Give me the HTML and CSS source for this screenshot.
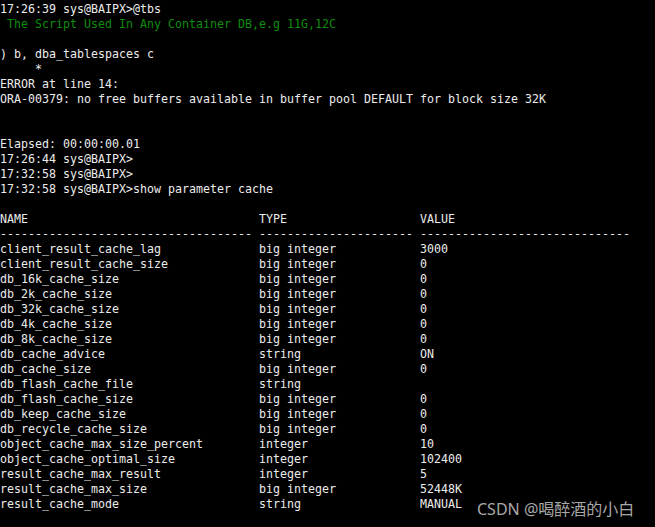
FILE: index.html
```html
<!DOCTYPE html>
<html>
<head>
<meta charset="utf-8">
<link rel="stylesheet" href="styles.css">
</head>
<body>
<div class="term"><pre class="out">17:26:39 sys@BAIPX&gt;@tbs
<span class="green"> The Script Used In Any Container DB,e.g 11G,12C</span>

) b, dba_tablespaces c
     *
ERROR at line 14:
ORA-00379: no free buffers available in buffer pool DEFAULT for block size 32K


Elapsed: 00:00:00.01
17:26:44 sys@BAIPX&gt;
17:32:58 sys@BAIPX&gt;
17:32:58 sys@BAIPX&gt;show parameter cache

NAME                                 TYPE                   VALUE
------------------------------------ ---------------------- ------------------------------
client_result_cache_lag              big integer            3000
client_result_cache_size             big integer            0
db_16k_cache_size                    big integer            0
db_2k_cache_size                     big integer            0
db_32k_cache_size                    big integer            0
db_4k_cache_size                     big integer            0
db_8k_cache_size                     big integer            0
db_cache_advice                      string                 ON
db_cache_size                        big integer            0
db_flash_cache_file                  string
db_flash_cache_size                  big integer            0
db_keep_cache_size                   big integer            0
db_recycle_cache_size                big integer            0
object_cache_max_size_percent        integer                10
object_cache_optimal_size            integer                102400
result_cache_max_result              integer                5
result_cache_max_size                big integer            52448K
result_cache_mode                    string                 MANUAL</pre>
<div class="watermark">CSDN @喝醉酒的小白</div>
</div>
</body>
</html>
```
FILE: styles.css
```css
html, body {
  margin: 0;
  padding: 0;
  background: #000;
}
.term {
  position: relative;
  width: 655px;
  height: 527px;
  overflow: hidden;
  background: #000;
  padding-top: 2px;
  box-sizing: border-box;
}
.out {
  margin: 0;
  font-family: "DejaVu Sans Mono", monospace;
  font-size: 11.63px;
  line-height: 15px;
  color: #ececec;
  white-space: pre;
}
.green {
  color: #0e8c0e;
}
.watermark {
  position: absolute;
  left: 477px;
  top: 499px;
  font-family: "Noto Sans", "Noto Sans CJK SC", sans-serif;
  font-size: 16px;
  line-height: 20px;
  color: #a8a8a8;
  white-space: nowrap;
}
```
